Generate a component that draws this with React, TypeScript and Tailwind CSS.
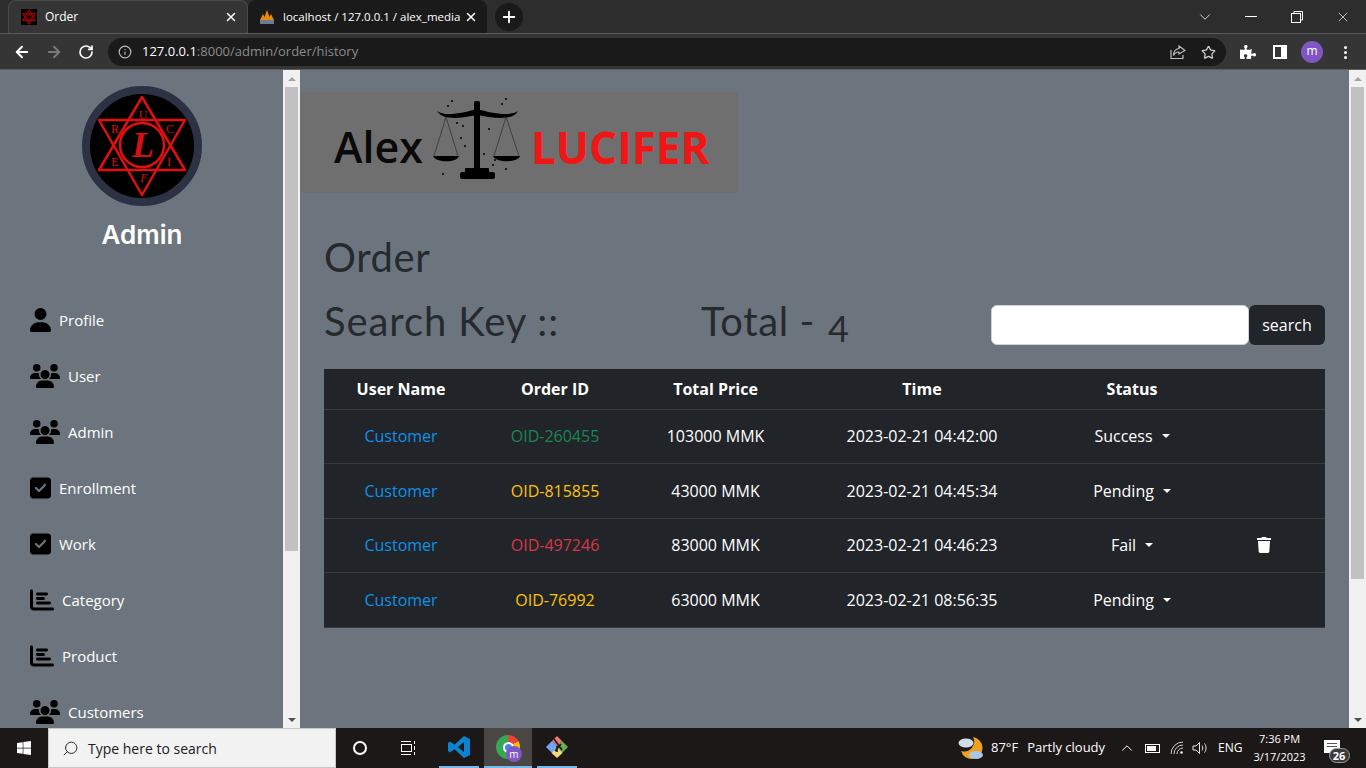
import { FaTrash, FaPuzzlePiece, FaWindows } from 'react-icons/fa';
import { FaChartBar, FaUser, FaUsers, FaSquareCheck } from 'react-icons/fa6';
import { ArrowLeft, ArrowRight, RotateCw, Info, Star, X, Plus, ChevronDown, ChevronUp, Search } from 'lucide-react';

const navItems = [
  { label: 'Profile', icon: 'user' },
  { label: 'User', icon: 'users' },
  { label: 'Admin', icon: 'users' },
  { label: 'Enrollment', icon: 'check' },
  { label: 'Work', icon: 'check' },
  { label: 'Category', icon: 'chart' },
  { label: 'Product', icon: 'chart' },
  { label: 'Customers', icon: 'users' },
];

const orders = [
  { id: 'OID-260455', color: 'text-[#198754]', price: '103000 MMK', time: '2023-02-21 04:42:00', status: 'Success', h: 'h-[54px]' },
  { id: 'OID-815855', color: 'text-[#ffc107]', price: '43000 MMK', time: '2023-02-21 04:45:34', status: 'Pending', h: 'h-[55px]' },
  { id: 'OID-497246', color: 'text-[#dc3545]', price: '83000 MMK', time: '2023-02-21 04:46:23', status: 'Fail', h: 'h-[54px]', trash: true },
  { id: 'OID-76992', color: 'text-[#ffc107]', price: '63000 MMK', time: '2023-02-21 08:56:35', status: 'Pending', h: 'h-[55px]' },
];

function NavIcon({ icon }: { icon: string }) {
  if (icon === 'user') return <FaUser className="text-black w-[21px] h-[24px] mr-[8px] shrink-0" />;
  if (icon === 'users') return <FaUsers className="text-black w-[30px] h-[24px] mr-[8px] shrink-0" />;
  if (icon === 'check') return <FaSquareCheck className="text-black w-[21px] h-[24px] mr-[8px] shrink-0" />;
  return <FaChartBar className="text-black w-[24px] h-[24px] mr-[8px] shrink-0" />;
}

function FaviconStar({ size }: { size: number }) {
  return (
    <svg width={size} height={size} viewBox="0 0 120 120" className="shrink-0">
      <rect width="120" height="120" fill="#000" />
      <path d="M60 8 L106 86 H14 Z M60 112 L14 34 H106 Z" fill="none" stroke="#a00000" strokeWidth="9" />
      <circle cx="60" cy="60" r="18" fill="none" stroke="#a00000" strokeWidth="7" />
    </svg>
  );
}

function Avatar() {
  return (
    <div className="w-[120px] h-[120px] rounded-full bg-black border-[8px] border-[#2c3144] overflow-hidden shrink-0">
      <svg width="104" height="104" viewBox="0 0 104 104" className="block">
        <g fill="none" stroke="#e10f0f">
          <path d="M52 3 L95 76 H9 Z" strokeWidth="2.5" strokeLinejoin="round" />
          <path d="M52 101 L9 26 H95 Z" strokeWidth="2.5" strokeLinejoin="round" />
          <circle cx="52" cy="51" r="22" strokeWidth="2.5" />
        </g>
        <g fill="#d80f0f" fontFamily="Liberation Serif, serif" textAnchor="middle">
          <text x="53" y="63" fontSize="36" fontStyle="italic" fontWeight="700">L</text>
          <text x="53" y="25" fontSize="12">U</text>
          <text x="25" y="39" fontSize="12">R</text>
          <text x="80" y="39" fontSize="12">C</text>
          <text x="25" y="72" fontSize="12">E</text>
          <text x="79" y="72" fontSize="12">I</text>
          <text x="54" y="88" fontSize="12" fontStyle="italic">F</text>
        </g>
      </svg>
    </div>
  );
}

function Scales() {
  return (
    <svg width="92" height="86" viewBox="0 0 92 86" className="shrink-0 -mt-[8px]">
      <g fill="#000">
        <rect x="41" y="5" width="6" height="72" rx="2" />
        <path d="M4 15 C12 21 30 17 44 13 C58 17 76 21 85 15 C80 25 60 22 44 19 C28 22 10 25 4 15 Z" />
        <path d="M0 60 H26 C24 67 3 67 0 60 Z" />
        <path d="M60 60 H87 C85 67 63 67 60 60 Z" />
        <rect x="32" y="72" width="24" height="6" rx="1" />
        <rect x="27" y="76" width="35" height="7" rx="2" />
        {[[15, 10], [19, 5], [69, 8], [73, 3], [24, 27], [30, 30], [28, 42], [32, 50], [56, 33], [51, 58], [60, 69], [73, 73], [10, 78], [62, 64]].map(([x, y]) => (
          <circle key={`${x}-${y}`} cx={x} cy={y} r="1" />
        ))}
      </g>
      <g stroke="#222" strokeWidth="0.6" fill="none">
        <path d="M13 21 L1 60 M13 21 L25 60 M73 21 L61 60 M73 21 L86 60" />
      </g>
    </svg>
  );
}

function ScrollBar({ thumb }: { thumb: string }) {
  return (
    <div className="w-[17px] shrink-0 bg-[#f1f1f1] flex flex-col items-center">
      <div className="h-[17px] flex items-center justify-center shrink-0">
        <div className="w-0 h-0 border-x-[4px] border-x-transparent border-b-[4px] border-b-[#a3a3a3]" />
      </div>
      <div className={`w-[13px] bg-[#c1c1c1] shrink-0 ${thumb}`} />
      <div className="flex-1" />
      <div className="h-[17px] flex items-center justify-center shrink-0">
        <div className="w-0 h-0 border-x-[4px] border-x-transparent border-t-[4px] border-t-[#505050]" />
      </div>
    </div>
  );
}

function BrowserBar() {
  return (
    <div className="h-[70px] shrink-0 bg-[#2d2d2d] font-['Open_Sans',sans-serif] text-white">
      <div className="h-[33px] flex items-end pl-[8px]">
        <div className="w-[240px] h-[33px] bg-[#353535] rounded-t-[8px] flex items-center pl-[12px] pr-[9px] border-t border-x border-[#4a4a4a]">
          <FaviconStar size={16} />
          <span className="text-[12px] ml-[8px] flex-1">Order</span>
          <X size={14} strokeWidth={2.5} className="text-white" />
        </div>
        <div className="w-[239px] h-[33px] bg-[#1a1a1a] rounded-t-[8px] flex items-center pl-[11px] pr-[9px]">
          <svg width="16" height="16" viewBox="0 0 16 16" className="shrink-0">
            <path d="M1 11 L4 5 L5.5 8 L8 1 L10.5 8 L12 5 L15 11 Z" fill="#e8890c" />
            <rect x="1" y="11" width="14" height="4" fill="#6c7a9c" />
          </svg>
          <span className="text-[11.5px] ml-[8px] flex-1 whitespace-nowrap">localhost / 127.0.0.1 / alex_media</span>
          <X size={14} strokeWidth={2.5} className="text-white ml-[3px] shrink-0" />
        </div>
        <div className="w-[28px] h-[28px] rounded-full bg-[#1a1a1a] ml-[8px] mb-[2px] flex items-center justify-center">
          <Plus size={18} strokeWidth={2.5} />
        </div>
        <div className="ml-auto h-[33px] flex items-center">
          <ChevronDown size={18} strokeWidth={1} />
          <div className="w-[12px] h-px bg-white ml-[31px]" />
          <svg width="12" height="12" viewBox="0 0 12 12" className="ml-[34px]" fill="none" stroke="#fff">
            <rect x="0.5" y="2.5" width="9" height="9" />
            <path d="M3 2.5 V0.5 H11.5 V9 H9.5" />
          </svg>
          <X size={16} strokeWidth={1} className="ml-[32px] mr-[15px]" />
        </div>
      </div>
      <div className="h-[37px] bg-[#353535] border-t border-t-[#5c5c5c] border-b border-b-[#5c5c5c] pt-px flex items-center">
        <ArrowLeft size={18} strokeWidth={2.5} className="ml-[13px]" />
        <ArrowRight size={18} strokeWidth={2.5} className="ml-[14px] text-[#7a7a7a]" />
        <RotateCw size={16} strokeWidth={2.5} className="ml-[15px]" />
        <div className="w-[1118px] h-[28px] ml-[14px] bg-[#1a1a1a] rounded-full flex items-center pl-[10px] pr-[10px]">
          <Info size={14} className="text-[#bdbdbd]" />
          <span className="text-[13px] ml-[10px] text-white">127.0.0.1</span>
          <span className="text-[13px] text-[#8c8c8c]">:8000/admin/order/history</span>
          <svg width="16" height="16" viewBox="0 0 16 16" className="ml-auto" fill="none" stroke="#bdbdbd" strokeWidth="1.2">
            <path d="M1 6 V14.5 H13 V11" />
            <path d="M9 2 L15 6.5 L9 10 V8 C6 8 4.5 9.5 3.5 11.5 C3.5 7.5 6 5 9 4.5 Z" />
          </svg>
          <Star size={15} strokeWidth={2} className="ml-[15px] text-[#d0d0d0]" />
        </div>
        <FaPuzzlePiece size={16} className="ml-[14px]" />
        <div className="w-[14px] h-[14px] border-[2px] border-white ml-[17px] flex justify-end">
          <div className="w-[4px] bg-white" />
        </div>
        <div className="w-[22px] h-[22px] rounded-full bg-[#7e57c2] ml-[14px] flex items-center justify-center text-[12px] leading-none pb-[2px]">m</div>
        <div className="ml-[21px] flex flex-col gap-[2px]">
          <span className="w-[3px] h-[3px] rounded-full bg-white" />
          <span className="w-[3px] h-[3px] rounded-full bg-white" />
          <span className="w-[3px] h-[3px] rounded-full bg-white" />
        </div>
      </div>
    </div>
  );
}

function Sidebar() {
  return (
    <div className="w-[300px] shrink-0 flex overflow-hidden bg-[#6c757d]">
      <div className="w-[283px] shrink-0 overflow-hidden">
        <div className="flex flex-col items-center pt-[16px] pl-[1px]">
          <Avatar />
          <h2 className="mt-[12px] text-[26px] leading-[34px] font-semibold text-white font-['Inter',sans-serif]">Admin</h2>
        </div>
        <div className="mt-[40px] pl-[30px] flex flex-col font-['Open_Sans',sans-serif] text-white text-[15px]">
          {navItems.map((item) => (
            <div key={item.label} className="h-[56px] flex items-center shrink-0">
              <NavIcon icon={item.icon} />
              <span>{item.label}</span>
            </div>
          ))}
        </div>
      </div>
      <ScrollBar thumb="h-[464px]" />
    </div>
  );
}

function OrderTable() {
  return (
    <table className="w-[1001px] table-fixed bg-[#212529] text-white text-[16px] font-['Open_Sans',sans-serif] text-center border-collapse">
      <thead>
        <tr className="h-[40px] border-b border-[#373b3e]">
          <th className="w-[154px] font-bold">User Name</th>
          <th className="w-[154px] font-bold">Order ID</th>
          <th className="w-[167px] font-bold">Total Price</th>
          <th className="w-[246px] font-bold">Time</th>
          <th className="w-[174px] font-bold">Status</th>
          <th />
        </tr>
      </thead>
      <tbody>
        {orders.map((o) => (
          <tr key={o.id} className={`${o.h} border-b border-[#373b3e]`}>
            <td className="text-[#1090e8]">Customer</td>
            <td className={o.color}>{o.id}</td>
            <td>{o.price}</td>
            <td>{o.time}</td>
            <td>
              <span className="inline-flex items-center">
                {o.status}
                <span className="ml-[9px] w-0 h-0 border-x-[4.8px] border-x-transparent border-t-[4.8px] border-t-white" />
              </span>
            </td>
            <td>
              {o.trash && (
                <span className="flex pl-[37px]">
                  <FaTrash size={16} />
                </span>
              )}
            </td>
          </tr>
        ))}
      </tbody>
    </table>
  );
}

function MainPanel() {
  return (
    <div className="flex-1 flex overflow-hidden bg-[#6c757d]">
      <div className="flex-1 overflow-hidden pt-[22px]">
        <div className="w-[438px] h-[101px] bg-[#6f6f6f] flex items-center pl-[34px] font-['Open_Sans',sans-serif] font-bold">
          <span className="text-[43px] font-semibold text-[#0a0a0a] leading-none pt-[8px] w-[99px] shrink-0">Alex</span>
          <Scales />
          <span className="text-[44px] text-[#f01616] leading-none pt-[8px] ml-[6px]">LUCIFER</span>
        </div>
        <div className="pl-[24px] pr-[24px] text-[#262a2e] font-['Lato',sans-serif]">
          <h1 className="mt-[40px] text-[40px] leading-[48px] tracking-[0.6px]">Order</h1>
          <div className="mt-[24px] flex items-center h-[40px]">
            <span className="text-[40px] w-[377px] tracking-[0.9px] -mt-[8px]">Search Key ::</span>
            <span className="text-[40px] tracking-[0.6px] -mt-[8px]">
              Total - <span className="relative top-[6px] left-[2px] text-[36px]">4</span>
            </span>
            <div className="ml-auto flex font-['Open_Sans',sans-serif]">
              <div className="w-[258px] h-[40px] bg-white rounded-[6px] border border-[#ced4da]" />
              <div className="w-[76px] h-[40px] bg-[#212529] rounded-[6px] text-white text-[16px] flex items-center justify-center">search</div>
            </div>
          </div>
          <div className="mt-[24px]">
            <OrderTable />
          </div>
        </div>
      </div>
      <ScrollBar thumb="h-[492px]" />
    </div>
  );
}

function Taskbar() {
  return (
    <div className="h-[40px] shrink-0 bg-[#1c1818] flex items-center text-white font-['Open_Sans',sans-serif]">
      <div className="w-[48px] flex justify-center">
        <FaWindows size={16} />
      </div>
      <div className="w-[288px] h-[40px] bg-[#f2f2f2] border border-[#c8c8c8] flex items-center pl-[13px] text-[#202020]">
        <Search size={17} strokeWidth={1.3} className="-scale-x-100" />
        <span className="text-[14px] ml-[9px]">Type here to search</span>
      </div>
      <div className="w-[14px] h-[14px] rounded-full border-[2px] border-white ml-[17px]" />
      <svg width="16" height="16" viewBox="0 0 16 16" className="ml-[33px]" fill="none" stroke="#fff">
        <rect x="1.5" y="4.5" width="10" height="7" />
        <path d="M1 1.5 H11 M1 14.5 H11 M14.5 1 V4 M14.5 6 V10 M14.5 12 V15" />
      </svg>
      <div className="w-[40px] ml-[23px] h-[40px] flex items-center justify-center border-b-[2px] border-[#76b9ed]">
        <svg width="24" height="24" viewBox="0 0 24 24">
          <path d="M17 1 L23 4 V20 L17 23 L7.5 14.2 L3 17.5 L1 16 V8 L3 6.5 L7.5 9.8 Z M17 7 L11 12 L17 17 Z" fill="#0a84d0" fillRule="evenodd" />
        </svg>
      </div>
      <div className="w-[48px] ml-[5px] h-[40px] bg-[#4a4644] flex items-center justify-center border-b-[2px] border-[#76b9ed] relative">
        <div className="w-[24px] h-[24px] rounded-full bg-[conic-gradient(#ea4335_-60deg,#ea4335_60deg,#fbbc05_60deg,#fbbc05_180deg,#34a853_180deg,#34a853_300deg)] flex items-center justify-center">
          <div className="w-[11px] h-[11px] rounded-full bg-[#4285f4] border-[2px] border-white" />
        </div>
        <div className="absolute left-[22px] top-[18px] w-[16px] h-[16px] rounded-full bg-[#7e57c2] text-[10px] flex items-center justify-center leading-none">m</div>
      </div>
      <div className="w-[40px] ml-[5px] h-[40px] flex items-center justify-center border-b-[2px] border-[#76b9ed]">
        <svg width="24" height="24" viewBox="0 0 24 24">
          <path d="M7 6 L12.5 12 L7 18 L1 12 Z" fill="#6ea8f5" />
          <path d="M17 6 L23 12 L17 18 L11.5 12 Z" fill="#6ab04c" />
          <path d="M12 12 L17.5 18 L12 23 L6.5 18 Z" fill="#f4d97a" />
          <path d="M12 1 L17 6 L12 11.5 L7 6 Z" fill="#e87a7a" />
          <path d="M9 4 L17 15 M12 11 L12 17 M16 9 L10 16" stroke="#1c1818" strokeWidth="1.6" fill="none" />
        </svg>
      </div>
      <svg width="26" height="26" viewBox="0 0 26 26" className="ml-[381px] shrink-0">
        <path d="M15 2 A11 11 0 1 1 3 16 A10 10 0 0 0 15 2 Z" fill="#f0a020" />
        <ellipse cx="8" cy="8" rx="7.5" ry="4.5" fill="#cfdcec" />
        <ellipse cx="18" cy="20" rx="7" ry="4" fill="#a9c6e6" />
      </svg>
      <span className="text-[13px] ml-[7px]">87°F</span>
      <span className="text-[13px] ml-[9px]">Partly cloudy</span>
      <ChevronUp size={18} strokeWidth={1.3} className="ml-[13px] shrink-0" />
      <div className="ml-[9px] w-[15px] h-[9px] border border-white p-[1px] flex shrink-0">
        <div className="w-[9px] bg-white" />
      </div>
      <svg width="14" height="14" viewBox="0 0 14 14" className="ml-[10px] shrink-0" fill="none" stroke="#d0d0d0" strokeWidth="1">
        <path d="M1 13 A12 12 0 0 1 13 1 M4 13 A9 9 0 0 1 13 4 M7 13 A6 6 0 0 1 13 7" />
        <circle cx="11.5" cy="11.5" r="1.2" fill="#fff" stroke="none" />
      </svg>
      <svg width="16" height="16" viewBox="0 0 16 16" className="ml-[8px] shrink-0" fill="none" stroke="#e8e8e8" strokeWidth="1">
        <path d="M1 6 H4 L7.5 2.5 V13.5 L4 10 H1 Z M10 5.5 C11 7 11 9 10 10.5 M12.5 3.5 C14.5 6 14.5 10 12.5 12.5" />
      </svg>
      <span className="text-[12px] ml-[10px]">ENG</span>
      <div className="ml-[4px] w-[66px] text-[11px] leading-[18px] flex flex-col items-center shrink-0">
        <span>7:36 PM</span>
        <span>3/17/2023</span>
      </div>
      <div className="ml-[11px] relative w-[16px] h-[13px] bg-white -mt-[3px] shrink-0 flex flex-col gap-[2px] pt-[3px] pl-[3px]">
        <div className="w-[10px] h-px bg-[#555]" />
        <div className="w-[10px] h-px bg-[#555]" />
        <div className="absolute left-[5px] top-[8px] w-[21px] h-[15px] rounded-full bg-[#3a3a3a] border border-[#9a9a9a] text-[11px] font-bold leading-[13px] text-center">26</div>
      </div>
    </div>
  );
}

export default function App() {
  return (
    <div className="w-[1366px] h-[768px] flex flex-col overflow-hidden">
      <BrowserBar />
      <div className="flex-1 flex min-h-0">
        <Sidebar />
        <MainPanel />
      </div>
      <Taskbar />
    </div>
  );
}
